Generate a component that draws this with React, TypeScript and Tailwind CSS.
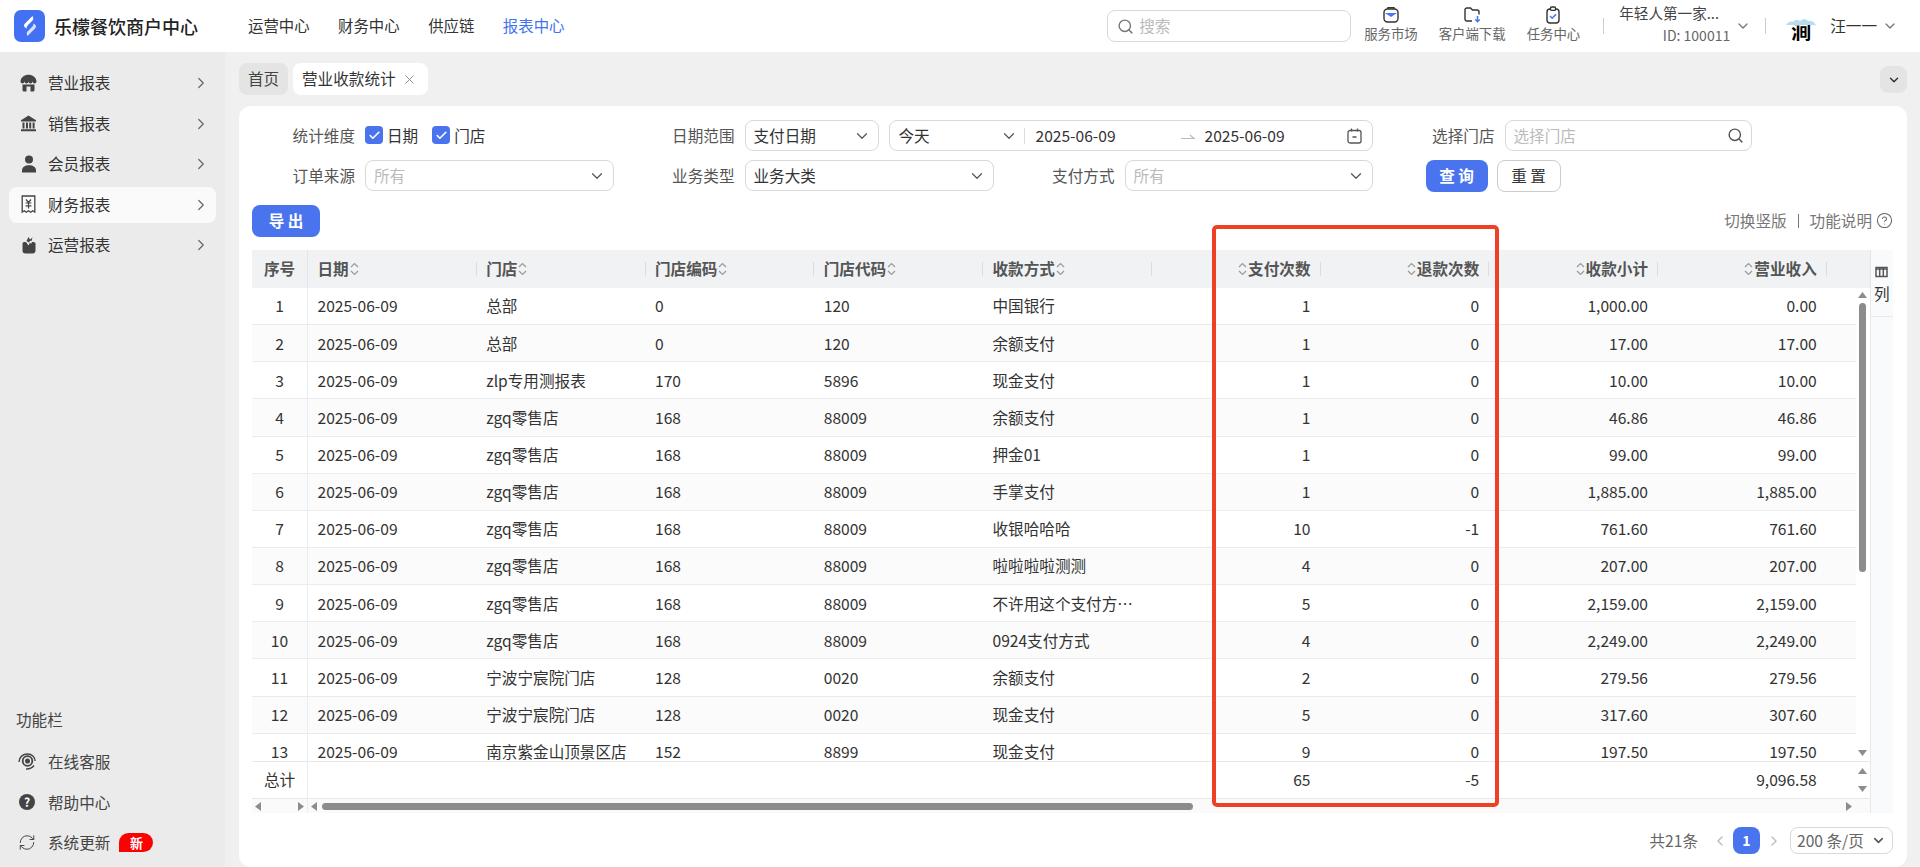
import { Check, ChevronDown, ChevronLeft, ChevronRight, Search, X, CircleHelp, RefreshCw } from 'lucide-react'

const rows = [
  ['1', '总部', '0', '120', '中国银行', '1', '0', '1,000.00', '0.00'],
  ['2', '总部', '0', '120', '余额支付', '1', '0', '17.00', '17.00'],
  ['3', 'zlp专用测报表', '170', '5896', '现金支付', '1', '0', '10.00', '10.00'],
  ['4', 'zgq零售店', '168', '88009', '余额支付', '1', '0', '46.86', '46.86'],
  ['5', 'zgq零售店', '168', '88009', '押金01', '1', '0', '99.00', '99.00'],
  ['6', 'zgq零售店', '168', '88009', '手掌支付', '1', '0', '1,885.00', '1,885.00'],
  ['7', 'zgq零售店', '168', '88009', '收银哈哈哈', '10', '-1', '761.60', '761.60'],
  ['8', 'zgq零售店', '168', '88009', '啦啦啦啦测测', '4', '0', '207.00', '207.00'],
  ['9', 'zgq零售店', '168', '88009', '不许用这个支付方…', '5', '0', '2,159.00', '2,159.00'],
  ['10', 'zgq零售店', '168', '88009', '0924支付方式', '4', '0', '2,249.00', '2,249.00'],
  ['11', '宁波宁宸院门店', '128', '0020', '余额支付', '2', '0', '279.56', '279.56'],
  ['12', '宁波宁宸院门店', '128', '0020', '现金支付', '5', '0', '317.60', '307.60'],
  ['13', '南京紫金山顶景区店', '152', '8899', '现金支付', '9', '0', '197.50', '197.50'],
]

function Logo() {
  return (
    <div className="w-[31px] h-[32px] rounded-[7px] bg-[#4470f4] flex items-center justify-center">
      <svg width="20" height="22" viewBox="0 0 20 22">
        <path d="M12.5 1 L5 8.5 Q3 10.8 5 12.5 L6.5 13.6 Q6.4 11.6 8 10 L13 5 Q14 3.4 12.5 1Z" fill="#fff" />
        <path d="M7.5 21 L15 13.5 Q17 11.2 15 9.5 L13.5 8.4 Q13.6 10.4 12 12 L7 17 Q6 18.6 7.5 21Z" fill="#fff" fillOpacity="0.8" />
      </svg>
    </div>
  )
}

function StoreIcon() {
  return (
    <svg width="17" height="18" viewBox="0 0 17 18" fill="#444">
      <path d="M8.5.8c4 0 7.6 2.6 8 6.4a2 2 0 0 1-4 .4 2 2 0 0 1-4 0 2 2 0 0 1-4 0 2 2 0 0 1-4-.4C.9 3.4 4.5.8 8.5.8z" />
      <path d="M2.5 10.4h12V16a1.5 1.5 0 0 1-1.5 1.5H4A1.5 1.5 0 0 1 2.5 16zM6.5 12.5v5h4v-5z" fillRule="evenodd" />
    </svg>
  )
}

function BankIcon() {
  return (
    <svg width="17" height="17" viewBox="0 0 17 17" fill="#444">
      <path d="M8.5.5 16 5.2v1.3H1V5.2z" />
      <path d="M2.5 7.5h2v6h-2zM6 7.5h2v6H6zM9.2 7.5h2v6h-2zM12.6 7.5h2v6h-2zM1 14.3h15v2H1z" />
    </svg>
  )
}

function UserIcon() {
  return (
    <svg width="16" height="18" viewBox="0 0 16 18" fill="#444">
      <circle cx="8" cy="4.6" r="4" />
      <path d="M1 17.5v-2.2C1 12.3 4 10.3 8 10.3s7 2 7 5v2.2z" />
    </svg>
  )
}

function ReceiptIcon() {
  return (
    <svg width="15" height="19" viewBox="0 0 15 19" fill="none" stroke="#444" strokeWidth="1.3">
      <path d="M1.2 1h12.6v16l-2.1-1.3-2 1.6-2.2-1.6-2.2 1.6-2-1.6-2.1 1.3z" />
      <path d="M5 4.5 7.5 7.5 10 4.5M4.6 8h5.8M4.6 10.8h5.8M7.5 7.5v6" strokeWidth="1.2" />
    </svg>
  )
}

function BagIcon() {
  return (
    <svg width="16" height="18" viewBox="0 0 16 18" fill="#444">
      <path d="M1.5 7.5Q1.5 6 3 6h2l2.5 3.5L9 6.5l1 1.5 1-2h1.500Q14.500 6 14.500 7.500V14.500Q14.500 17.500 11.500 17.500H4.500Q1.500 17.500 1.500 14.500Z" />
      <path d="M5.500 5 7.500 1 9 3.500l2.500-2-1 3.500L9 4.800 8 6.500Z" />
    </svg>
  )
}

function ServiceIcon() {
  return (
    <svg width="18" height="17" viewBox="0 0 18 17" fill="none" stroke="#444">
      <circle cx="9.5" cy="8" r="2.5" fill="#444" stroke="none" />
      <circle cx="9.5" cy="8" r="4.8" strokeWidth="1.8" />
      <path d="M1 9c0-5 4-8 8.5-8S17 4 17 8M8 16c3 .2 6-1 8-3.5" strokeWidth="1.4" />
    </svg>
  )
}

function TopIcon({ kind }: { kind: 'bag' | 'folder' | 'clip' }) {
  if (kind === 'bag') {
    return (
      <svg width="16" height="17" viewBox="0 0 16 17" fill="none" stroke="#333" strokeWidth="1.4">
        <path d="M5 3V1.7h6V3" />
        <rect x="1" y="3" width="14" height="13" rx="3.5" />
        <path d="M2 7h12L8 11z" fill="#4a78f5" stroke="none" />
      </svg>
    )
  }
  if (kind === 'folder') {
    return (
      <svg width="17" height="16" viewBox="0 0 17 16" fill="none" stroke="#333" strokeWidth="1.4">
        <path d="M8 14H3a2 2 0 0 1-2-2V3a2 2 0 0 1 2-2h3.5l2 2H13a2 2 0 0 1 2 2v2.5" />
        <path d="M13.5 9v5.5M11.3 12.5l2.2 2.2 2.2-2.2" stroke="#4a78f5" strokeWidth="1.6" />
      </svg>
    )
  }
  return (
    <svg width="14" height="18" viewBox="0 0 14 18" fill="none" stroke="#333" strokeWidth="1.4">
      <rect x="1" y="3" width="12" height="14" rx="3" />
      <rect x="4.5" y="1" width="5" height="3.4" rx="1" fill="#fff" />
      <path d="m4 10 2.2 2.2L10 8.4" stroke="#4a78f5" strokeWidth="1.6" />
    </svg>
  )
}

function SortIcon() {
  return (
    <svg width="9" height="14" viewBox="0 0 9 14" fill="none" stroke="#9a9a9a" strokeWidth="1.2" className="shrink-0">
      <path d="M1 5 4.5 1.5 8 5M1 9l3.5 3.5L8 9" />
    </svg>
  )
}

function CheckItem({ label }: { label: string }) {
  return (
    <div className="flex items-center gap-[4px]">
      <span className="w-[18px] h-[18px] rounded-[4px] bg-[#4a74ee] flex items-center justify-center">
        <Check size={13} strokeWidth={3} color="#fff" />
      </span>
      <span className="text-[#333]">{label}</span>
    </div>
  )
}

function FieldLabel({ children }: { children: string }) {
  return <div className="text-right pr-[10px] text-[#555] leading-[31px]">{children}</div>
}

function SelectBox({ text, muted = false, className = '' }: { text: string; muted?: boolean; className?: string }) {
  return (
    <div className={`h-[31px] border border-[#d9d9d9] rounded-lg bg-white flex items-center justify-between pl-[8px] pr-[7px] ${className}`}>
      <span className={muted ? 'text-[#bbb]' : 'text-[#333]'}>{text}</span>
      <ChevronDown size={18} color="#555" strokeWidth={1.6} />
    </div>
  )
}

function HeaderCell({ label, right = false }: { label: string; right?: boolean }) {
  if (right) {
    return (
      <div className="flex items-center justify-end gap-[9px]">
        <div className="flex items-center gap-[1px] font-bold text-[#555] whitespace-nowrap">
          <SortIcon />
          {label}
        </div>
        <span className="w-px h-[14px] bg-[#dcdde0]" />
      </div>
    )
  }
  return (
    <div className="flex items-center justify-between pl-[9.5px]">
      <div className="flex items-center gap-[1px] font-bold text-[#555] whitespace-nowrap">
        {label}
        <SortIcon />
      </div>
      <span className="w-px h-[14px] bg-[#dcdde0]" />
    </div>
  )
}

function Tri({ dir }: { dir: 'up' | 'down' | 'left' | 'right' }) {
  const points = {
    up: '0,6 9,6 4.5,0',
    down: '0,0 9,0 4.5,6',
    left: '6,0 6,9 0,4.5',
    right: '0,0 0,9 6,4.5',
  }[dir]
  const vertical = dir === 'up' || dir === 'down'
  return (
    <svg width={vertical ? 9 : 6} height={vertical ? 6 : 9} className="shrink-0">
      <polygon points={points} fill="#8c8c8c" />
    </svg>
  )
}

function NavItem({ icon, label, active = false }: { icon: React.ReactNode; label: string; active?: boolean }) {
  return (
    <div className={`h-[36px] mb-[4.5px] mx-[9px] rounded-lg flex items-center pl-[11px] pr-[6px] ${active ? 'bg-[#fafafa]' : ''}`}>
      <span className="w-[17px] flex justify-center">{icon}</span>
      <span className="ml-[11px] flex-1 text-[#333]">{label}</span>
      <ChevronRight size={18} color="#666" strokeWidth={1.6} />
    </div>
  )
}

function ToolItem({ icon, label, badge = false }: { icon: React.ReactNode; label: string; badge?: boolean }) {
  return (
    <div className="h-[40.5px] flex items-center pl-[18px]">
      <span className="w-[18px] flex justify-center">{icon}</span>
      <span className="ml-[12px] text-[#444]">{label}</span>
      {badge && (
        <span className="ml-[9px] w-[34px] h-[19px] bg-[#f00] rounded-t-full rounded-br-full flex items-center justify-center text-white text-[13px] font-bold">
          新
        </span>
      )}
    </div>
  )
}

export default function App() {
  return (
    <div className="relative w-[1920px] h-[867px] overflow-hidden flex flex-col bg-[#f0f0f0] text-[15.6px] font-['Noto_Sans_CJK_SC',sans-serif]">
      {/* top bar */}
      <header className="h-[52px] shrink-0 bg-white flex items-center pl-[14px]">
        <Logo />
        <div className="ml-[9px] w-[145px] text-[18px] font-medium text-[#222] whitespace-nowrap">乐檬餐饮商户中心</div>
        <nav className="ml-[49px] flex gap-[28.5px] text-[15.4px] text-[#333]">
          <span>运营中心</span>
          <span>财务中心</span>
          <span>供应链</span>
          <span className="text-[#3f74f0]">报表中心</span>
        </nav>
        <div className="ml-auto flex items-center">
          <div className="w-[244px] h-[32px] border border-[#d9d9d9] rounded-lg flex items-center pl-[9px] gap-[5px] text-[#bbb]">
            <Search size={17} color="#777" />
            搜索
          </div>
          <div className="ml-[13px] mb-[8px] flex gap-[21px] text-[13.4px] text-[#666] leading-[14px]">
            {([['bag', '服务市场'], ['folder', '客户端下载'], ['clip', '任务中心']] as const).map(([kind, label]) => (
              <div key={label} className="flex flex-col items-center">
                <div className="h-[20px] flex items-center">
                  <TopIcon kind={kind} />
                </div>
                <div className="mt-[1px] whitespace-nowrap">{label}</div>
              </div>
            ))}
          </div>
          <span className="ml-[23px] w-px h-[16px] bg-[#ccc]" />
          <div className="ml-[15px] mb-[4px] w-[111px] flex flex-col text-[14.6px] text-[#444]">
            <span className="leading-[22px] whitespace-nowrap">年轻人第一家...</span>
            <span className="text-right text-[14px] leading-[22px] text-[#666]">ID: 100011</span>
          </div>
          <ChevronDown className="ml-[5px]" size={16} color="#777" />
          <span className="ml-[14px] w-px h-[16px] bg-[#ccc]" />
          <div className="relative ml-[20px] mr-[2px] w-[30px] h-[32px] flex items-end justify-center">
            <span className="text-[20px] leading-[22px] font-bold text-black">涧</span>
            <svg className="absolute left-0 top-[6px]" width="30" height="10" viewBox="0 0 30 10">
              <path d="M0 9Q3 4 7 6 10 2 14 5 19 1 22 5 27 4 30 9Z" fill="#b8ddf2" />
            </svg>
          </div>
          <span className="ml-[12px] text-[#333]">汪一一</span>
          <ChevronDown className="ml-[5px] mr-[22px]" size={16} color="#777" />
        </div>
      </header>

      <div className="flex-1 flex min-h-0">
        {/* sidebar */}
        <aside className="w-[225px] shrink-0 bg-[#ebebeb] flex flex-col justify-between pt-[13px] pb-[4px]">
          <div>
            <NavItem icon={<StoreIcon />} label="营业报表" />
            <NavItem icon={<BankIcon />} label="销售报表" />
            <NavItem icon={<UserIcon />} label="会员报表" />
            <NavItem icon={<ReceiptIcon />} label="财务报表" active />
            <NavItem icon={<BagIcon />} label="运营报表" />
          </div>
          <div>
            <div className="h-[40px] mb-[2px] pl-[16px] flex items-center text-[#444]">功能栏</div>
            <ToolItem icon={<ServiceIcon />} label="在线客服" />
            <ToolItem
              icon={
                <span className="w-[16px] h-[16px] rounded-full bg-[#444] flex items-center justify-center text-white text-[12px] font-bold leading-none">
                  ?
                </span>
              }
              label="帮助中心"
            />
            <ToolItem icon={<RefreshCw size={19} color="#444" strokeWidth={1.3} />} label="系统更新" badge />
          </div>
        </aside>

        <main className="flex-1 min-w-0 flex flex-col pl-[14px] pr-[13px]">
          {/* tabs */}
          <div className="h-[54px] shrink-0 pt-[11px] flex items-start">
            <div className="h-[32px] w-[49px] rounded-lg bg-[#e4e4e4] flex items-center justify-center text-[#444]">首页</div>
            <div className="ml-[5px] h-[32px] w-[135px] rounded-lg bg-white flex items-center pl-[9px] text-[#333] whitespace-nowrap">
              营业收款统计
              <X className="ml-[6px]" size={15} color="#888" strokeWidth={1.5} />
            </div>
            <div className="ml-auto mt-[3px] w-[27px] h-[27px] rounded-lg bg-[#e4e4e4] flex items-center justify-center">
              <ChevronDown size={14} color="#333" strokeWidth={2.5} />
            </div>
          </div>

          {/* card */}
          <section className="flex-1 min-h-0 bg-white rounded-[12px] pt-[14px] pl-[13px] pr-[14px] flex flex-col">
            <div className="grid grid-cols-[113px_248.5px_131px_249px_131px_248px_132px_247px] gap-y-[9px]">
              <FieldLabel>统计维度</FieldLabel>
              <div className="flex items-center gap-[14px]">
                <CheckItem label="日期" />
                <CheckItem label="门店" />
              </div>
              <FieldLabel>日期范围</FieldLabel>
              <div className="col-span-3 flex gap-[10px]">
                <SelectBox text="支付日期" className="w-[134px]" />
                <div className="flex-1 h-[31px] border border-[#d9d9d9] rounded-lg flex items-center pl-[9px] text-[#333]">
                  <span className="w-[101px]">今天</span>
                  <ChevronDown size={18} color="#555" strokeWidth={1.6} />
                  <span className="ml-[6px] w-px h-[16px] bg-[#ddd]" />
                  <span className="ml-[11px] w-[144px]">2025-06-09</span>
                  <svg width="16" height="8" viewBox="0 0 16 8" fill="none" stroke="#bbb" strokeWidth="1.2">
                    <path d="M1 6.5h13L10 3" />
                  </svg>
                  <span className="ml-[9px] w-[142px]">2025-06-09</span>
                  <svg width="15" height="16" viewBox="0 0 15 16" fill="none" stroke="#555" strokeWidth="1.3">
                    <rect x="1" y="2.5" width="13" height="12.5" rx="2" />
                    <path d="M4.5.5v3M10.5.5v3M5.5 9h4" />
                  </svg>
                </div>
              </div>
              <FieldLabel>选择门店</FieldLabel>
              <div className="h-[31px] border border-[#d9d9d9] rounded-lg flex items-center justify-between pl-[8px] pr-[7px] text-[#bbb]">
                选择门店
                <Search size={17} color="#555" />
              </div>

              <FieldLabel>订单来源</FieldLabel>
              <SelectBox text="所有" muted />
              <FieldLabel>业务类型</FieldLabel>
              <SelectBox text="业务大类" />
              <FieldLabel>支付方式</FieldLabel>
              <SelectBox text="所有" muted />
              <div className="col-span-2 pl-[53px] flex gap-[9px]">
                <button className="w-[62px] h-[32px] rounded-lg bg-[#4a74ee] text-white font-bold">查 询</button>
                <button className="w-[64px] h-[32px] rounded-lg border border-[#ccc] text-[#333]">重 置</button>
              </div>
            </div>

            <div className="mt-[13px] flex items-center justify-between">
              <button className="w-[68px] h-[32px] rounded-lg bg-[#4a74ee] text-white font-bold">导 出</button>
              <div className="flex items-center text-[#777]">
                切换竖版
                <span className="mx-[11px] w-px h-[14px] bg-[#777]" />
                功能说明
                <CircleHelp className="ml-[4px]" size={17} color="#666" strokeWidth={1.5} />
              </div>
            </div>

            {/* table */}
            <div className="mt-[13px] h-[563px] shrink-0 flex text-[#333]">
              <div className="w-[1618.7px] shrink-0 flex flex-col">
                <div className="h-[38px] shrink-0 grid grid-cols-[56px_repeat(9,168.75px)_1fr] bg-[#f1f2f4] border-r border-[#e4e5e8]">
                  <div className="flex items-center justify-center font-bold text-[#555] border-r border-[#e4e5e8]">序号</div>
                  <HeaderCell label="日期" />
                  <HeaderCell label="门店" />
                  <HeaderCell label="门店编码" />
                  <HeaderCell label="门店代码" />
                  <HeaderCell label="收款方式" />
                  <HeaderCell label="支付次数" right />
                  <HeaderCell label="退款次数" right />
                  <HeaderCell label="收款小计" right />
                  <HeaderCell label="营业收入" right />
                </div>

                <div className="h-[474px] shrink-0 flex border-b border-[#e8e8e8]">
                  <div className="w-[1604px] shrink-0 overflow-hidden">
                    {rows.map((r, i) => (
                      <div
                        key={r[0]}
                        className={`h-[37.15px] grid grid-cols-[56px_repeat(9,168.75px)_1fr] border-b-[1.5px] border-[#ebebeb] items-center ${i % 2 === 1 ? 'bg-[#fafbfa]' : 'bg-white'}`}
                      >
                        <div className="h-full flex items-center justify-center border-r-[1.5px] border-[#ebeef0]">{r[0]}</div>
                        <div className="pl-[9.5px]">2025-06-09</div>
                        <div className="pl-[9.5px]">{r[1]}</div>
                        <div className="pl-[9.5px]">{r[2]}</div>
                        <div className="pl-[9.5px]">{r[3]}</div>
                        <div className="pl-[9.5px] whitespace-nowrap">{r[4]}</div>
                        <div className="text-right pr-[10px]">{r[5]}</div>
                        <div className="text-right pr-[10px]">{r[6]}</div>
                        <div className="text-right pr-[10px]">{r[7]}</div>
                        <div className="text-right pr-[10px]">{r[8]}</div>
                      </div>
                    ))}
                  </div>
                  <div className="flex-1 flex flex-col items-center pt-[4px] pb-[5px] border-r border-[#e8e8e8]">
                    <Tri dir="up" />
                    <div className="mt-[5px] w-[7px] h-[269px] rounded-full bg-[#8c8c8c]" />
                    <div className="mt-auto">
                      <Tri dir="down" />
                    </div>
                  </div>
                </div>

                <div className="h-[37px] shrink-0 flex border-b-[1.5px] border-[#e8e8e8]">
                  <div className="w-[1604px] shrink-0 grid grid-cols-[56px_repeat(9,168.75px)_1fr] items-center">
                    <div className="h-full flex items-center justify-center border-r-[1.5px] border-[#ebeef0]">总计</div>
                    <div className="col-span-5" />
                    <div className="text-right pr-[10px]">65</div>
                    <div className="text-right pr-[10px]">-5</div>
                    <div />
                    <div className="text-right pr-[10px]">9,096.58</div>
                  </div>
                  <div className="flex-1 flex flex-col items-center justify-between py-[6px] border-r border-[#e8e8e8]">
                    <Tri dir="up" />
                    <Tri dir="down" />
                  </div>
                </div>

                <div className="h-[14px] shrink-0 flex items-center bg-[#fafafa] border-r border-[#e8e8e8]">
                  <div className="w-[56px] h-full flex items-center justify-between px-[3px] border-r-[1.5px] border-[#ebeef0]">
                    <Tri dir="left" />
                    <Tri dir="right" />
                  </div>
                  <div className="ml-[3px]">
                    <Tri dir="left" />
                  </div>
                  <div className="ml-[5px] w-[871px] h-[7px] rounded-full bg-[#8c8c8c]" />
                  <div className="ml-auto mr-[18px]">
                    <Tri dir="right" />
                  </div>
                </div>
              </div>

              <div className="flex-1 bg-[#f9fafc]">
                <div className="h-[67px] border-b border-[#e8e8e8] flex flex-col items-center pt-[16px]">
                  <svg width="13" height="12" viewBox="0 0 13 12" fill="none" stroke="#555" strokeWidth="1.5">
                    <rect x="1" y="1.5" width="11" height="9" />
                    <path d="M4.7 1.5v9M8.3 1.5v9M1 3h11" />
                  </svg>
                  <span className="mt-[5px] leading-[20px]">列</span>
                </div>
              </div>
            </div>

            {/* pagination */}
            <div className="mt-[14px] h-[27px] shrink-0 flex items-center justify-end text-[#666]">
              共21条
              <ChevronLeft className="ml-[14px]" size={16} color="#bbb" />
              <span className="ml-[5px] w-[27px] h-[27px] rounded-lg bg-[#4a74ee] flex items-center justify-center text-white text-[14px] font-bold">1</span>
              <ChevronRight className="ml-[6px]" size={16} color="#bbb" />
              <div className="ml-[8px] w-[103px] h-[27px] border border-[#d9d9d9] rounded-lg flex items-center justify-between pl-[6px] pr-[6px] whitespace-nowrap">
                200 条/页
                <ChevronDown size={15} color="#555" strokeWidth={2.5} />
              </div>
            </div>
          </section>
        </main>
      </div>

      {/* red annotation around the count columns */}
      <div className="absolute left-[1212px] top-[225px] w-[287px] h-[582px] border-[4px] border-[#ee4024] rounded-[5px]" />
    </div>
  )
}
